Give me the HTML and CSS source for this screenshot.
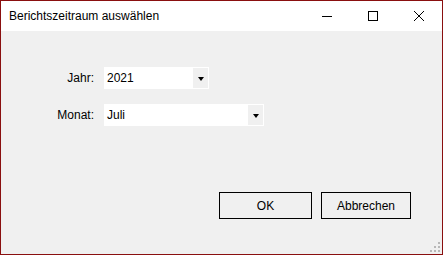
FILE: index.html
```html
<!DOCTYPE html>
<html lang="de">
<head>
	<meta charset="UTF-8">
	<title>Berichtszeitraum auswählen</title>
	<link rel="stylesheet" href="styles.css">
</head>
<body>
	<div class="window">
		<div class="titlebar">
			<span class="title">Berichtszeitraum auswählen</span>
			<div class="controls">
				<div class="ctl"><svg width="10" height="10" viewBox="0 0 10 10"><path d="M0 5.5H10" stroke="#000" stroke-width="1"/></svg></div>
				<div class="ctl"><svg width="10" height="10" viewBox="0 0 10 10"><rect x="0.5" y="0.5" width="9" height="9" fill="none" stroke="#000" stroke-width="1"/></svg></div>
				<div class="ctl"><svg width="10" height="10" viewBox="0 0 10 10"><path d="M0 0L10 10M10 0L0 10" stroke="#000" stroke-width="1"/></svg></div>
			</div>
		</div>
		<div class="content">
			<div class="form">
				<label>Jahr:</label>
				<div class="combo short">
					<span class="value">2021</span>
					<span class="drop"><i class="arrow"></i></span>
				</div>
				<label>Monat:</label>
				<div class="combo long">
					<span class="value">Juli</span>
					<span class="drop"><i class="arrow"></i></span>
				</div>
			</div>
			<div class="buttons">
				<div class="btn ok">OK</div>
				<div class="btn cancel">Abbrechen</div>
			</div>
			<div class="grip">
				<svg width="11" height="11" viewBox="0 0 11 11">
					<g fill="#b8b8b8">
						<rect x="8" y="0" width="2" height="2"/>
						<rect x="4" y="4" width="2" height="2"/>
						<rect x="8" y="4" width="2" height="2"/>
						<rect x="0" y="8" width="2" height="2"/>
						<rect x="4" y="8" width="2" height="2"/>
						<rect x="8" y="8" width="2" height="2"/>
					</g>
				</svg>
			</div>
		</div>
	</div>
</body>
</html>
```
FILE: styles.css
```css
* {
	margin: 0;
	padding: 0;
	box-sizing: border-box;
}
body {
	font-family: "Liberation Sans", "Noto Sans", sans-serif;
	font-size: 12px;
	color: #000;
	background: #f0f0f0;
}
.window {
	width: 443px;
	height: 255px;
	border: 1px solid #8a0f0f;
	display: flex;
	flex-direction: column;
	background: #f0f0f0;
}
.titlebar {
	height: 30px;
	background: #fff;
	display: flex;
	align-items: center;
	justify-content: space-between;
}
.title {
	padding-left: 8px;
	font-size: 12px;
	line-height: 16px;
}
.controls {
	display: flex;
	height: 30px;
}
.ctl {
	width: 46px;
	height: 30px;
	display: flex;
	align-items: center;
	justify-content: center;
}
.content {
	flex: 1;
	position: relative;
	padding-top: 36px;
}
.form {
	display: grid;
	grid-template-columns: 93px auto;
	column-gap: 10px;
	row-gap: 15px;
	align-items: center;
	justify-items: start;
}
.form label {
	justify-self: end;
	line-height: 16px;
}
.combo {
	height: 22px;
	background: #fff;
	display: flex;
	align-items: stretch;
	padding: 1px;
}
.combo.short { width: 105px; }
.combo.long { width: 160px; }
.value {
	flex: 1;
	padding-left: 2px;
	line-height: 20px;
}
.drop {
	width: 15px;
	background: #f0f0f0;
	display: flex;
	align-items: center;
	justify-content: center;
}
.arrow {
	width: 0;
	height: 0;
	border-left: 3px solid transparent;
	border-right: 3px solid transparent;
	border-top: 4px solid #000;
	margin-top: 1px;
}
.buttons {
	display: flex;
	gap: 9px;
	margin-top: 66px;
	padding-left: 218px;
}
.btn {
	height: 27px;
	border: 1px solid #000;
	background: #f0f0f0;
	display: flex;
	align-items: center;
	justify-content: center;
}
.ok { width: 93px; }
.cancel { width: 90px; }
.grip {
	position: absolute;
	right: 1px;
	bottom: 1px;
	width: 11px;
	height: 11px;
}
```
